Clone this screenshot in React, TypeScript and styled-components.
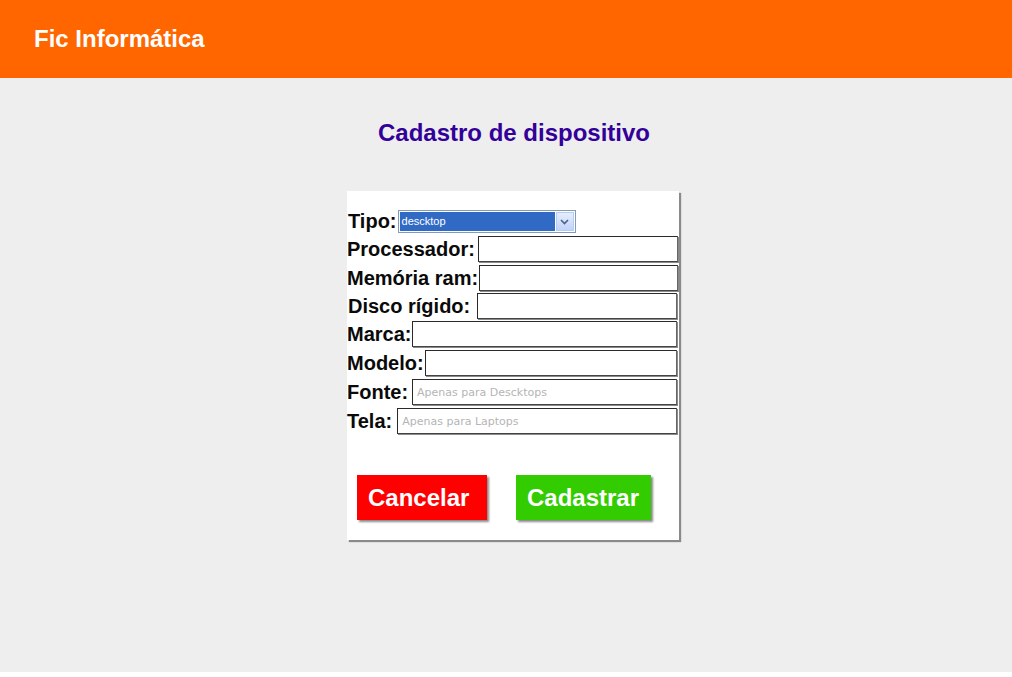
import React from "react";
import styled, { createGlobalStyle } from "styled-components";

const Global = createGlobalStyle`
  html, body { margin: 0; padding: 0; background: #ffffff; }
  body { font-family: "Liberation Sans", Arial, sans-serif; }
`;

const Page = styled.div`
  height: 672px;
  background: #eeeeee;
  display: flex;
  flex-direction: column;
`;

const Header = styled.header`
  height: 78px;
  background: #ff6600;
  display: flex;
  align-items: center;
  padding-left: 34px;
  box-sizing: border-box;
`;

const Brand = styled.h1`
  margin: 0;
  margin-top: -1px;
  color: #ffffff;
  font: bold 24px/1 "Liberation Sans", Arial, sans-serif;
`;

const Title = styled.h2`
  margin: 43px 0 0;
  text-align: center;
  color: #330099;
  font: bold 24px/24px "Liberation Sans", Arial, sans-serif;
  padding-left: 16px;
`;

const Card = styled.form`
  align-self: flex-start;
  margin: 46px 0 0 347px;
  width: 332px;
  height: 349px;
  box-sizing: border-box;
  background: #ffffff;
  box-shadow: 2px 2px 1px #8a8a8a;
  padding: 18px 0 0 0;
  display: flex;
  flex-direction: column;
`;

const Row = styled.div<{ $gap: number; $h?: number; $mt?: number; $right?: number; $indent?: number }>`
  display: flex;
  align-items: center;
  gap: ${(p) => p.$gap}px;
  height: ${(p) => p.$h ?? 26}px;
  margin-top: ${(p) => p.$mt ?? 3}px;
  padding-right: ${(p) => p.$right ?? 2}px;
  padding-left: ${(p) => p.$indent ?? 0}px;
`;

const Label = styled.label`
  font: bold 20px/1 "Liberation Sans", Arial, sans-serif;
  color: #0a0a0a;
  white-space: nowrap;
`;

const Input = styled.input`
  flex: 1;
  min-width: 0;
  height: 26px;
  box-sizing: border-box;
  border: 1px solid #2a2a2a;
  border-right-color: #666;
  border-bottom-color: #444;
  box-shadow: 1px 1px 0 #8a8a8a;
  background: #ffffff;
  padding: 0 4px;
  font: 11px "DejaVu Sans", sans-serif;
  color: #333;
  outline: none;
  &::placeholder {
    color: #b5b5b5;
    font-style: normal;
  }
`;

const Select = styled.div`
  width: 178px;
  height: 23px;
  box-sizing: border-box;
  border: 1px solid #7f9db9;
  background: #ffffff;
  display: flex;
  padding: 1px;
  margin-top: 1px;
`;

const SelectValue = styled.div`
  flex: 1;
  background: #316ac5;
  color: #ffffff;
  font: 11px/19px "Liberation Sans", Arial, sans-serif;
  padding-left: 2px;
`;

const SelectButton = styled.div`
  width: 18px;
  margin-left: 1px;
  background: linear-gradient(#e6eefc, #c1d3fb);
  border: 1px solid #b8cbf2;
  box-sizing: border-box;
  display: flex;
  align-items: center;
  justify-content: center;
`;

const Buttons = styled.div`
  display: flex;
  gap: 29px;
  margin-top: 41px;
  padding-left: 10px;
`;

const Button = styled.button<{ $bg: string; $w: number }>`
  width: ${(p) => p.$w}px;
  height: 45px;
  border: none;
  background: ${(p) => p.$bg};
  color: #ffffff;
  font: bold 24px/1 "Liberation Sans", Arial, sans-serif;
  text-align: left;
  padding: 0 0 0 11px;
  box-shadow: 2px 2px 2px #8a8a8a;
  cursor: pointer;
`;

export default function App() {
  return (
    <>
      <Global />
      <Page>
        <Header>
          <Brand>Fic Informática</Brand>
        </Header>
        <Title>Cadastro de dispositivo</Title>
        <Card onSubmit={(e) => e.preventDefault()}>
          <Row $gap={1} $h={24} $mt={0} $indent={1}>
            <Label>Tipo:</Label>
            <Select>
              <SelectValue>descktop</SelectValue>
              <SelectButton>
                <svg width="9" height="6" viewBox="0 0 9 6">
                  <path d="M1 1 L4.5 4.5 L8 1" fill="none" stroke="#4d6185" strokeWidth="1.6" />
                </svg>
              </SelectButton>
            </Select>
          </Row>
          <Row $gap={3} $mt={3} $right={1}>
            <Label>Processador:</Label>
            <Input />
          </Row>
          <Row $gap={1} $right={1}>
            <Label>Memória ram:</Label>
            <Input />
          </Row>
          <Row $gap={7} $mt={2} $indent={1}>
            <Label>Disco rígido:</Label>
            <Input />
          </Row>
          <Row $gap={1} $mt={2}>
            <Label>Marca:</Label>
            <Input />
          </Row>
          <Row $gap={1}>
            <Label>Modelo:</Label>
            <Input />
          </Row>
          <Row $gap={4}>
            <Label>Fonte:</Label>
            <Input placeholder="Apenas para Descktops" />
          </Row>
          <Row $gap={5}>
            <Label>Tela:</Label>
            <Input placeholder="Apenas para Laptops" />
          </Row>
          <Buttons>
            <Button type="button" $bg="#ff0000" $w={130}>Cancelar</Button>
            <Button type="submit" $bg="#33cc00" $w={135}>Cadastrar</Button>
          </Buttons>
        </Card>
      </Page>
    </>
  );
}
